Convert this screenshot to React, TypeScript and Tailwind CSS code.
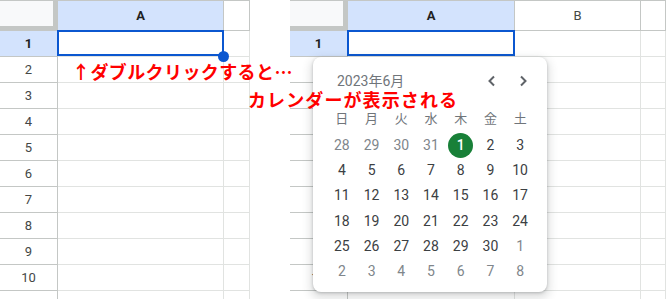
import React from "react";

/** ---------- Sheet grid ---------- */
const rows = Array.from({ length: 11 }, (_, i) => i + 1);

const HEAD_LINE = "border-[#c4c7c5]";
const CELL_LINE = "border-[#e1e3e1]";

const Sheet = ({ cols, labels }: { cols: string; labels: string[] }) => {
    return (
        <div className="grid h-full" style={{ gridTemplateColumns: cols }}>
            {/* header row */}
            <div className={`h-[31px] bg-[#f8f9fa] border-t border-r-[5px] border-b-[5px] ${HEAD_LINE}`} />
            {labels.map((l, i) => (
                <div
                    key={l + i}
                    className={`h-[31px] border-t border-b border-r ${HEAD_LINE} flex items-center justify-center text-[13px] ${
                        i === 0 ? "bg-[#d3e3fd] font-bold text-[#1f1f1f]" : "bg-white text-[#444746]"
                    }`}
                >
                    {l}
                </div>
            ))}

            {/* body */}
            {rows.map((r) => (
                <React.Fragment key={r}>
                    <div
                        className={`h-[26px] border-r border-b ${HEAD_LINE} flex items-center justify-center text-[13px] ${
                            r === 1 ? "bg-[#d3e3fd] font-bold text-[#1f1f1f]" : "bg-white text-[#444746]"
                        }`}
                    >
                        {r}
                    </div>
                    {labels.map((l, i) => (
                        <div
                            key={l + i}
                            className={`h-[26px] border-r border-b bg-white ${CELL_LINE} ${
                                r === 1 && i === 0 ? "border-r-[#a8c7fa]" : ""
                            }`}
                        />
                    ))}
                </React.Fragment>
            ))}
        </div>
    );
};

/** ---------- Calendar popup ---------- */
const weekdays = ["日", "月", "火", "水", "木", "金", "土"];

const days: { d: number; muted?: boolean; today?: boolean }[] = [
    { d: 28, muted: true }, { d: 29, muted: true }, { d: 30, muted: true }, { d: 31, muted: true },
    { d: 1, today: true }, { d: 2 }, { d: 3 },
    ...Array.from({ length: 27 }, (_, i) => ({ d: i + 4 })),
    { d: 1, muted: true }, { d: 2, muted: true }, { d: 3, muted: true }, { d: 4, muted: true },
    { d: 5, muted: true }, { d: 6, muted: true }, { d: 7, muted: true }, { d: 8, muted: true },
];

const Chevron = ({ dir }: { dir: "l" | "r" }) => (
    <svg width="10" height="12" viewBox="0 0 10 12" className="text-[#5f6368]">
        <path
            d={dir === "l" ? "M7 1.5 L2.5 6 L7 10.5" : "M3 1.5 L7.5 6 L3 10.5"}
            fill="none"
            stroke="currentColor"
            strokeWidth="2"
        />
    </svg>
);

const Calendar = () => (
    <div className="absolute left-[313px] top-[57px] w-[234px] h-[235px] bg-white rounded-lg shadow-[0_1px_3px_rgba(60,64,67,0.3),0_4px_8px_3px_rgba(60,64,67,0.15)] pt-[12px]">
        <div className="h-[24px] flex items-center pl-[24px] pr-[19px]">
            <span className="text-[14px] text-[#70757a]">2023年6月</span>
            <div className="ml-auto flex items-center gap-[21px]">
                <Chevron dir="l" />
                <Chevron dir="r" />
            </div>
        </div>
        <div className="ml-[14px] w-[208px] grid grid-cols-7 mt-[13px]">
            {weekdays.map((w) => (
                <div key={w} className="h-[25px] flex items-center justify-center text-[13px] text-[#70757a]">
                    {w}
                </div>
            ))}
        </div>
        <div className="ml-[14px] w-[208px] grid grid-cols-7 mt-[2px]">
            {days.map((x, i) => (
                <div key={i} className="h-[25.2px] flex items-center justify-center text-[14px]">
                    {x.today ? (
                        <span className="w-[25px] h-[25px] rounded-full bg-[#188038] text-white font-medium flex items-center justify-center">
                            {x.d}
                        </span>
                    ) : (
                        <span className={x.muted ? "text-[#80868b]" : "text-[#3c4043]"}>{x.d}</span>
                    )}
                </div>
            ))}
        </div>
    </div>
);

export default function App() {
    return (
        <div className="relative w-[666px] h-[299px] overflow-hidden bg-white font-['Roboto','Noto_Sans_CJK_JP',Arial,sans-serif]">
            <div className="flex h-full gap-[40px]">
                {/* left sheet */}
                <div className="relative w-[250px] shrink-0 overflow-hidden">
                    <Sheet cols="58px 166px 1fr" labels={["A", ""]} />
                    <div className="absolute left-[57px] top-[30px] w-[167px] h-[26px] border-2 border-[#0b57d0]" />
                    <div className="absolute left-[218px] top-[51px] w-[11px] h-[11px] rounded-full bg-[#0b57d0]" />
                </div>

                {/* right sheet */}
                <div className="relative flex-1 overflow-hidden">
                    <Sheet cols="58px 167px 126px 1fr" labels={["A", "B", ""]} />
                    <div className="absolute left-[57px] top-[30px] w-[168px] h-[26px] border-2 border-[#0b57d0]" />
                </div>
            </div>

            <Calendar />

            {/* annotations */}
            <div className="absolute left-[72px] top-[62px] text-[18px] leading-none font-bold text-[#ff0000] font-['Noto_Sans_CJK_JP',sans-serif] whitespace-nowrap tracking-[0.4px]">
                ↑ダブルクリックすると…
            </div>
            <div className="absolute left-[248px] top-[90px] text-[18px] leading-none font-bold text-[#ff0000] font-['Noto_Sans_CJK_JP',sans-serif] whitespace-nowrap tracking-[1.1px]">
                カレンダーが表示される
            </div>
        </div>
    );
}
